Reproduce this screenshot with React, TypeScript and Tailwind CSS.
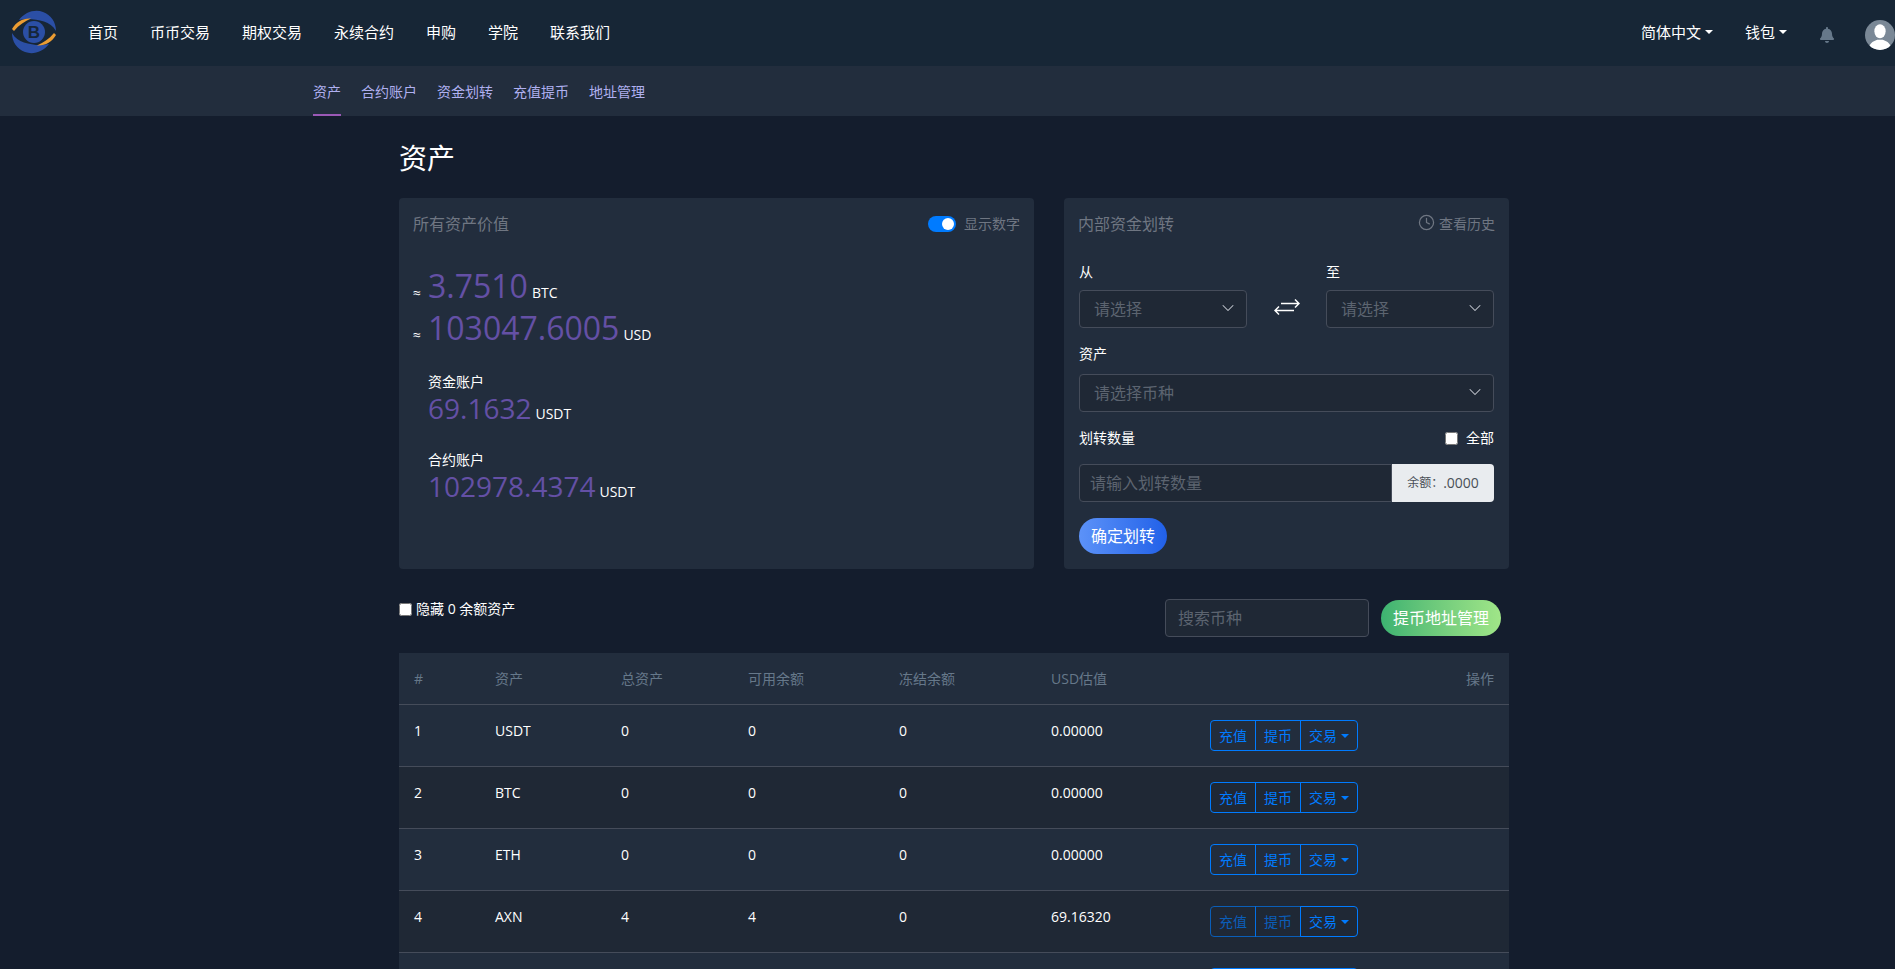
import { ChevronDown, Clock } from "lucide-react";
import { FaBell } from "react-icons/fa";

const cols = "grid grid-cols-[81px_126px_127px_151px_152px_159px_1fr] px-0";

const Caret = ({ className }: { className: string }) => (
  <span className={`inline-block w-0 h-0 border-x-4 border-x-transparent border-t-4 ${className}`} />
);

const arc = "M11 14C17 6 27 3 35 6C43 9 48 16 48 25C45 20 41 17 36 15.5C28 13 19 12 11 14Z";
const swoosh = "M4 23C8 16 15 12 23 12.5C17 15 11 19 6 25Z";

const Logo = () => (
  <svg viewBox="0 0 52 52" className="w-13 h-13 flex-none">
    <path d={arc} fill="#2b4fa6" />
    <path d={arc} fill="#2b4fa6" transform="rotate(180 26 26)" />
    <path d={swoosh} fill="#eb9c32" />
    <path d={swoosh} fill="#eb9c32" transform="rotate(180 26 26)" />
    <circle cx="26" cy="26" r="11" fill="#2b4fa6" />
    <text x="26" y="32" textAnchor="middle" fontSize="17" fontWeight="700" fill="#16263a" fontFamily="Liberation Sans, sans-serif">B</text>
  </svg>
);

const Avatar = () => (
  <div className="w-7.5 h-7.5 rounded-full overflow-hidden bg-[#7a8896] flex-none">
    <svg viewBox="0 0 32 32" className="w-7.5 h-7.5">
      <ellipse cx="16" cy="12" rx="6" ry="7.5" fill="#fff" />
      <path d="M4 32C4 25 8 23 13 21H19C24 23 28 25 28 32Z" fill="#fff" />
    </svg>
  </div>
);

const Swap = () => (
  <svg viewBox="0 0 26 17" className="w-6.5 h-4.5 flex-none" fill="none" stroke="#fff" strokeWidth="1.5">
    <path d="M7 5H25M21 1L25 5L21 9" />
    <path d="M20 12H1M5 8L1 12L5 16" />
  </svg>
);

const Select = ({ text, className = "" }: { text: string; className?: string }) => (
  <div className={`h-9.5 flex items-center justify-between pl-3.5 pr-2 bg-[#1f2835] border border-[#454c5a] rounded text-base text-[#5c6470] ${className}`}>
    <span>{text}</span>
    <ChevronDown size={20} strokeWidth={1.25} className="text-[#c5cad2] mb-0.5" />
  </div>
);

const Group = ({ disabled = false }: { disabled?: boolean }) => (
  <div className="flex h-7.75 text-sm text-[#007bff] leading-none">
    <button className={`px-2 border border-[#007bff] rounded-l ${disabled ? "opacity-65" : ""}`}>充值</button>
    <button className={`px-2 -ml-px border border-[#007bff] ${disabled ? "opacity-65" : ""}`}>提币</button>
    <button className="px-2 -ml-px border border-[#007bff] rounded-r flex items-center gap-1">
      交易 <Caret className="border-t-[#007bff]" />
    </button>
  </div>
);

const rows = [
  ["1", "USDT", "0", "0", "0", "0.00000", false],
  ["2", "BTC", "0", "0", "0", "0.00000", false],
  ["3", "ETH", "0", "0", "0", "0.00000", false],
  ["4", "AXN", "4", "4", "0", "69.16320", true],
] as const;

export default function App() {
  return (
    <div className="h-screen overflow-hidden bg-[#141d2d] text-white font-['Open_Sans','Noto_Sans_CJK_SC',sans-serif]">
      <header className="h-16.5 bg-[#172636] flex items-center justify-between pl-2 pb-0.5">
        <div className="flex items-center gap-7">
          <Logo />
          <nav className="flex gap-8 text-[15px]">
            {["首页", "币币交易", "期权交易", "永续合约", "申购", "学院", "联系我们"].map((t) => (
              <a key={t}>{t}</a>
            ))}
          </nav>
        </div>
        <div className="flex items-center gap-8 text-[15px]">
          <span className="flex items-center gap-1">简体中文 <Caret className="border-t-white" /></span>
          <span className="flex items-center gap-1">钱包 <Caret className="border-t-white" /></span>
          <div className="flex items-center gap-7.5 pt-1.5">
            <FaBell size={16} className="text-[#66788a]" />
            <Avatar />
          </div>
        </div>
      </header>

      <div className="h-12.5 bg-[#222d3d] flex gap-5 pl-[313px] text-sm text-[#b0b0f0]">
        <a className="flex items-center pt-1 border-b-2 border-[#9b59b6]">资产</a>
        <a className="flex items-center pt-0.5">合约账户</a>
        <a className="flex items-center pt-0.5">资金划转</a>
        <a className="flex items-center pt-0.5">充值提币</a>
        <a className="flex items-center pt-0.5">地址管理</a>
      </div>

      <main className="w-[1110px] ml-[399px] pt-6">
        <h1 className="text-[28px] leading-9 mb-5.5">资产</h1>

        <div className="flex gap-7.5">
          <section className="flex-1 bg-[#222d3d] rounded-sm px-3.5 pt-3.5">
            <div className="flex items-center justify-between">
              <h2 className="text-base leading-6 text-[#6f7682]">所有资产价值</h2>
              <div className="flex items-center gap-2 text-sm text-[#6f7682]">
                <span className="w-7 h-4 rounded-full bg-[#007bff] flex justify-end items-center p-0.5">
                  <span className="w-3 h-3 rounded-full bg-white" />
                </span>
                显示数字
              </div>
            </div>
            <div className="mt-7.5 flex items-baseline leading-10">
              <span className="text-sm w-3.75">≈</span>
              <span className="text-[32px] text-[#6450a5]">3.7510</span>
              <span className="text-sm ml-1">BTC</span>
            </div>
            <div className="flex items-baseline leading-10 mt-0.5">
              <span className="text-sm w-3.75">≈</span>
              <span className="text-[32px] text-[#6450a5]">103047.6005</span>
              <span className="text-sm ml-1">USD</span>
            </div>
            <div className="pl-3.75 mt-6">
              <div className="text-sm leading-5">资金账户</div>
              <div className="flex items-baseline leading-8">
                <span className="text-[28px] text-[#6450a5]">69.1632</span>
                <span className="text-sm ml-1">USDT</span>
              </div>
              <div className="text-sm leading-5 mt-6.5">合约账户</div>
              <div className="flex items-baseline leading-8">
                <span className="text-[28px] text-[#6450a5]">102978.4374</span>
                <span className="text-sm ml-1">USDT</span>
              </div>
            </div>
          </section>

          <section className="w-[445px] bg-[#222d3d] rounded-sm px-3.75 pt-3.5 pb-3.75">
            <div className="flex items-center justify-between -mx-px">
              <h2 className="text-base leading-6 text-[#6f7682]">内部资金划转</h2>
              <span className="flex items-center gap-1 text-sm text-[#6f7682]">
                <Clock size={17} strokeWidth={1.75} className="mb-1" />
                查看历史
              </span>
            </div>
            <div className="mt-6 flex items-end justify-between">
              <div className="w-42">
                <div className="text-sm leading-6 mb-1.5">从</div>
                <Select text="请选择" />
              </div>
              <div className="pb-3"><Swap /></div>
              <div className="w-42">
                <div className="text-sm leading-6 mb-1.5">至</div>
                <Select text="请选择" />
              </div>
            </div>
            <div className="text-sm leading-5 mt-4 mb-2.5">资产</div>
            <Select text="请选择币种" />
            <div className="mt-4 mb-4 flex items-center justify-between text-sm leading-5">
              <span>划转数量</span>
              <label className="flex items-center gap-2">
                <input type="checkbox" readOnly />
                全部
              </label>
            </div>
            <div className="flex h-9.5">
              <input
                placeholder="请输入划转数量"
                className="flex-1 min-w-0 bg-[#1f2835] border border-[#454c5a] rounded-l px-2.5 text-base outline-none placeholder:text-[#5c6470]"
              />
              <span className="w-25.5 bg-[#e9ecef] rounded-r flex items-center justify-center text-sm text-[#495057]">
                <span className="text-xs">余额：</span>.0000
              </span>
            </div>
            <button className="mt-4 h-9 px-3 rounded-full text-base bg-linear-to-r from-[#5c92f8] to-[#2160e8]">确定划转</button>
          </section>
        </div>

        <div className="mt-7.5 flex items-start justify-between pr-2">
          <label className="flex items-center gap-1 text-sm leading-5">
            <input type="checkbox" readOnly />
            隐藏 0 余额资产
          </label>
          <div className="flex items-center gap-3">
            <input
              placeholder="搜索币种"
              className="w-51 h-9.5 bg-[#1f2835] border border-[#454c5a] rounded px-3 text-base outline-none placeholder:text-[#5c6470]"
            />
            <button className="h-9 px-3 rounded-full text-base bg-linear-to-r from-[#3cb371] to-[#a0e688]">提币地址管理</button>
          </div>
        </div>

        <div className="mt-4 text-sm">
          <div className={`${cols} h-13 items-center bg-[#222d3d] border-b border-[#454c5a] text-[#66788a]`}>
            <span className="pl-3.75">#</span>
            <span className="pl-3.75">资产</span>
            <span className="pl-3.75">总资产</span>
            <span className="pl-3.75">可用余额</span>
            <span className="pl-3.75">冻结余额</span>
            <span className="pl-3.75">USD估值</span>
            <span className="text-right pr-3.75">操作</span>
          </div>
          {rows.map(([n, a, t, f, z, u, d], i) => (
            <div
              key={n}
              className={`${cols} h-15.5 pt-3.75 items-start leading-normal border-b border-[#454c5a] ${i % 2 ? "bg-[#1f2835]" : "bg-[#222d3d]"}`}
            >
              <span className="pl-3.75">{n}</span>
              <span className="pl-3.75">{a}</span>
              <span className="pl-3.75">{t}</span>
              <span className="pl-3.75">{f}</span>
              <span className="pl-3.75">{z}</span>
              <span className="pl-3.75">{u}</span>
              <span className="pl-3.75"><Group disabled={d} /></span>
            </div>
          ))}
          <div className={`${cols} h-15.5 pt-3.75 items-start bg-[#222d3d]`}>
            <span className="col-start-7 pl-3.75">
              <span className="block w-37 h-7.75 border border-[#007bff] rounded" />
            </span>
          </div>
        </div>
      </main>
    </div>
  );
}
